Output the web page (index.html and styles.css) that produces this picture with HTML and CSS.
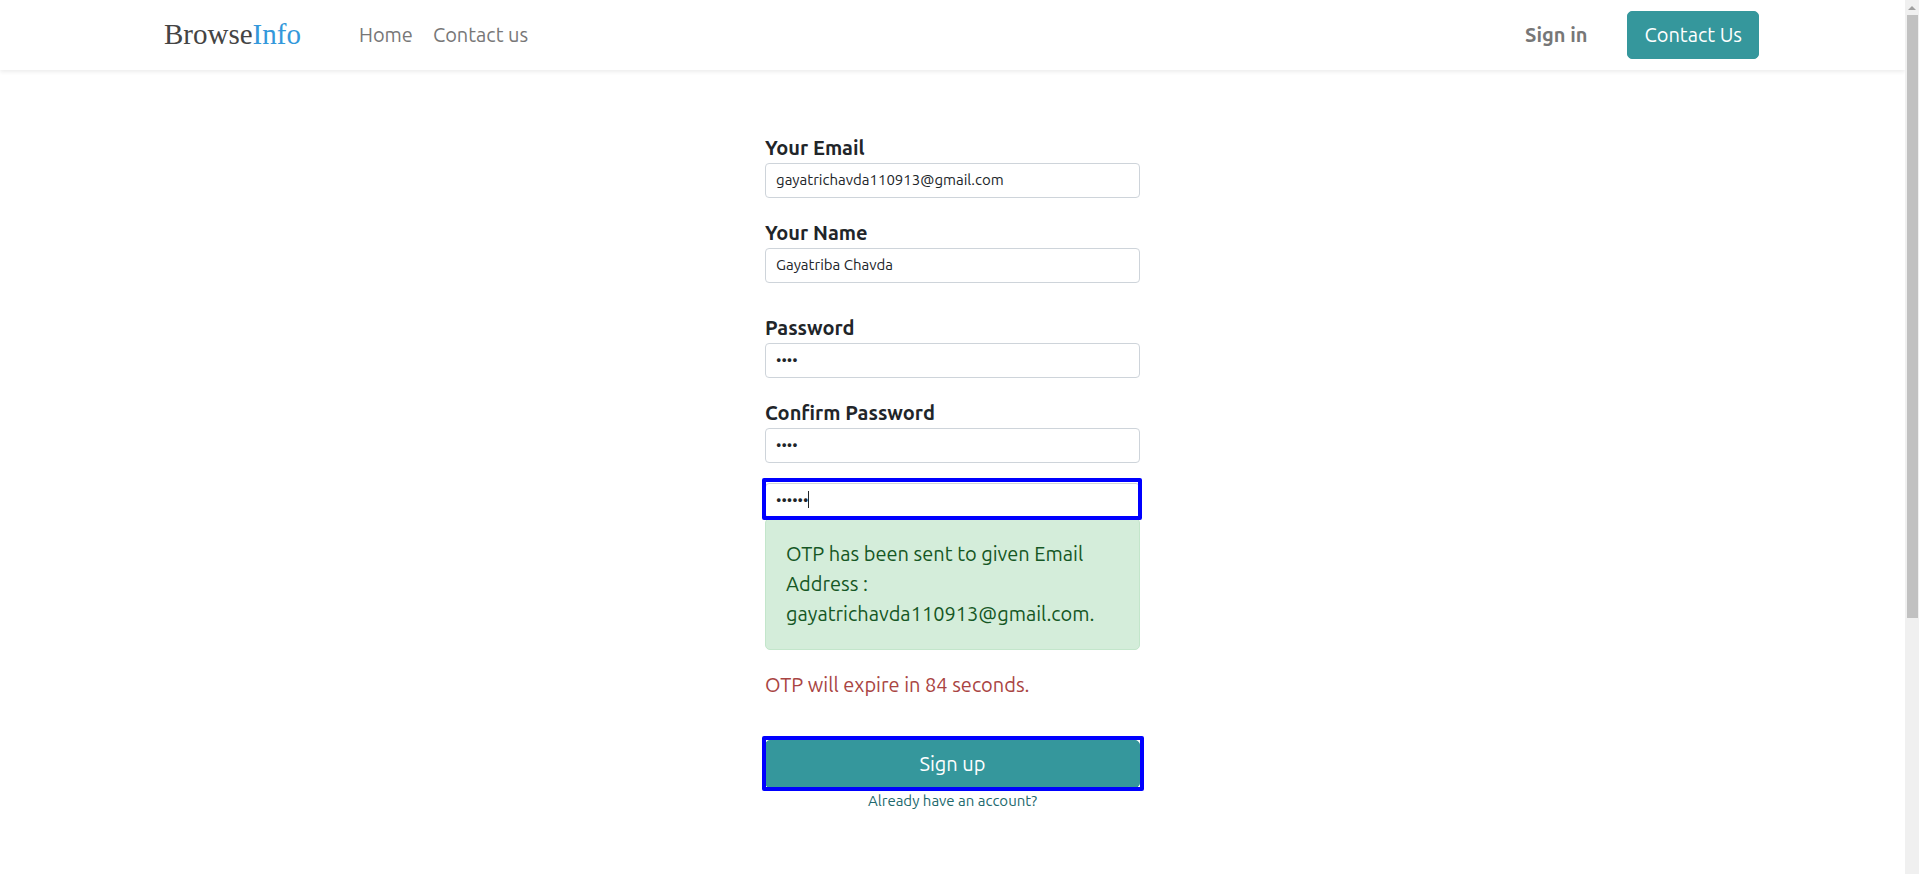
FILE: index.html
```
<!DOCTYPE html>
<html lang="en">

<head>
    <meta charset="UTF-8">
    <meta name="viewport" content="width=device-width, initial-scale=1.0">
    <title>Sign up | BrowseInfo</title>
    <link rel="stylesheet" href="styles.css">
</head>

<body>
    <div class="page">
        <header class="navbar">
            <a class="brand" href="#">Browse<span>Info</span></a>
            <nav class="menu">
                <a href="#">Home</a>
                <a href="#">Contact us</a>
            </nav>
            <a class="signin" href="#">Sign in</a>
            <a class="btn" href="#">Contact Us</a>
        </header>

        <main>
            <form class="signup">
                <div class="field">
                    <label for="login">Your Email</label>
                    <input type="email" id="login" value="gayatrichavda110913@gmail.com">
                </div>
                <div class="field field-name">
                    <label for="name">Your Name</label>
                    <input type="text" id="name" value="Gayatriba Chavda">
                </div>
                <div class="field">
                    <label for="password">Password</label>
                    <input type="password" id="password" value="demo">
                </div>
                <div class="field">
                    <label for="confirm">Confirm Password</label>
                    <input type="password" id="confirm" value="demo">
                </div>
                <div class="otp marked">
                    <input type="password" id="otp" aria-label="OTP" value="123456">
                    <span class="caret"></span>
                </div>
                <p class="alert">OTP has been sent to given Email Address : gayatrichavda110913@gmail.com.</p>
                <p class="expire">OTP will expire in 84 seconds.</p>
                <div class="submit marked">
                    <button type="submit" class="btn">Sign up</button>
                </div>
                <a class="login-link" href="#">Already have an account?</a>
            </form>
        </main>
    </div>

    <div class="scrollbar">
        <span class="arrow"></span>
        <span class="thumb"></span>
    </div>
</body>

</html>
```
FILE: styles.css
```
* {
    margin: 0;
    padding: 0;
    box-sizing: border-box;
}

body {
    display: flex;
    height: 100vh;
    overflow: hidden;
    font-family: Ubuntu, "Noto Sans", sans-serif;
    font-size: 20px;
    line-height: 30px;
    color: #212529;
    background-color: #fff;
}

a {
    color: inherit;
    text-decoration: none;
}

.page {
    flex: 1;
    overflow: hidden;
}

/* header */
.navbar {
    display: flex;
    align-items: center;
    height: 70px;
    padding: 0 146px 0 164px;
    box-shadow: 0 2px 4px rgba(0, 0, 0, 0.075);
}

.brand {
    padding-bottom: 2px;
    font-family: "Liberation Serif", serif;
    font-size: 29px;
    color: #444;
}

.brand span {
    color: #3498db;
}

.menu {
    display: flex;
    flex: 1;
    gap: 20px;
    margin-left: 58px;
    color: #777;
}

.signin {
    margin-right: 40px;
    font-weight: bold;
    color: #777;
}

.btn {
    padding: 8px 16px;
    border: 1px solid #35979c;
    border-radius: 5px;
    font: inherit;
    color: #fff;
    background-color: #35979c;
    cursor: pointer;
}

/* form */
.signup {
    display: flex;
    flex-direction: column;
    width: 375px;
    margin: 63px auto 0;
}

.field {
    display: flex;
    flex-direction: column;
    margin-bottom: 20px;
}

.field-name {
    margin-bottom: 30px;
}

label {
    font-weight: bold;
}

input {
    width: 100%;
    height: 35px;
    padding: 0 10px 2px;
    border: 1px solid #ced4da;
    border-radius: 4px;
    font-family: inherit;
    font-size: 15px;
    color: #212529;
    background-color: #fff;
}

.marked {
    position: relative;
    display: flex;
}

.marked::after {
    content: "";
    position: absolute;
    inset: -4px -4px -3px -3px;
    border: 4px solid #00f;
    border-radius: 2px;
    pointer-events: none;
}

.otp::after {
    inset: -5px -2px -2px -3px;
}

.caret {
    position: absolute;
    top: 8px;
    left: 43px;
    width: 1px;
    height: 17px;
    background-color: #212529;
}

.alert {
    padding: 20px;
    border: 1px solid #c3e6cb;
    border-radius: 5px;
    color: #155724;
    background-color: #d4edda;
}

.expire {
    margin: 20px 0 40px;
    color: #a94442;
}

.submit .btn {
    flex: 1;
}

.login-link {
    align-self: center;
    font-size: 15px;
    line-height: 25px;
    color: #22696d;
}

/* page scrollbar */
.scrollbar {
    display: flex;
    flex-direction: column;
    align-items: center;
    gap: 5px;
    width: 14px;
    padding-top: 6px;
    background-color: #f0f0f0;
}

.arrow {
    border: 4px solid transparent;
    border-top: 0;
    border-bottom-color: #a0a0a0;
}

.thumb {
    width: 11px;
    height: 603px;
    background-color: #c1c1c1;
}
```
